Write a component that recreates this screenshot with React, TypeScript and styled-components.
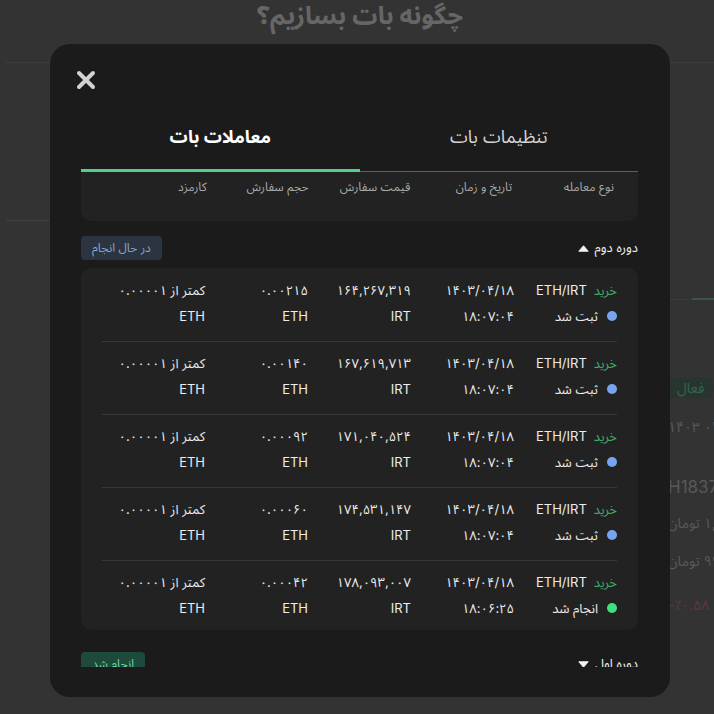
import { useLayoutEffect, useRef } from 'react'
import styled, { createGlobalStyle } from 'styled-components'

type Trade = {
  date: string
  time: string
  price: string
  volume: string
  status: 'pending' | 'done'
}

const trades: Trade[] = [
  { date: '۱۴۰۳/۰۴/۱۸', time: '۱۸:۰۷:۰۴', price: '۱۶۴,۲۶۷,۳۱۹', volume: '۰.۰۰۲۱۵', status: 'pending' },
  { date: '۱۴۰۳/۰۴/۱۸', time: '۱۸:۰۷:۰۴', price: '۱۶۷,۶۱۹,۷۱۳', volume: '۰.۰۰۱۴۰', status: 'pending' },
  { date: '۱۴۰۳/۰۴/۱۸', time: '۱۸:۰۷:۰۴', price: '۱۷۱,۰۴۰,۵۲۴', volume: '۰.۰۰۰۹۲', status: 'pending' },
  { date: '۱۴۰۳/۰۴/۱۸', time: '۱۸:۰۷:۰۴', price: '۱۷۴,۵۳۱,۱۴۷', volume: '۰.۰۰۰۶۰', status: 'pending' },
  { date: '۱۴۰۳/۰۴/۱۸', time: '۱۸:۰۶:۲۵', price: '۱۷۸,۰۹۳,۰۰۷', volume: '۰.۰۰۰۴۲', status: 'done' },
]

const firstRound: Trade[] = [
  { date: '۱۴۰۳/۰۴/۱۷', time: '۱۲:۱۰:۴۱', price: '۱۶۱,۰۲۳,۸۸۰', volume: '۰.۰۰۳۱۰', status: 'done' },
  { date: '۱۴۰۳/۰۴/۱۷', time: '۱۲:۰۹:۱۳', price: '۱۵۸,۷۴۲,۱۰۵', volume: '۰.۰۰۲۰۴', status: 'done' },
]

const headers = ['نوع معامله', 'تاریخ و زمان', 'قیمت سفارش', 'حجم سفارش', 'کارمزد']

export default function App() {
  const scrollRef = useRef<HTMLDivElement>(null)

  // the list is shown scrolled a little, header card tucked under the tabs
  useLayoutEffect(() => {
    if (scrollRef.current) scrollRef.current.scrollTop = 18
  }, [])

  return (
    <>
      <GlobalStyle />
      <Page>
        <PageHeader>
          <PageTitle>چگونه بات بسازیم؟</PageTitle>
        </PageHeader>
        <PageBody>
          <LeftPanel />
          <BotCard>
            <BotTabs>
              <BotTab $active />
              <BotTab />
            </BotTabs>
            <BotRow $top={78}>
              <span>وضعیت</span>
              <ActiveBadge>فعال</ActiveBadge>
            </BotRow>
            <BotRow $top={19}>
              <span>زمان</span>
              <span>۰۴:۵۱ ۱۴۰۳</span>
            </BotRow>
            <BotRow $top={39} $big>
              <span>شناسه</span>
              <span>H18373</span>
            </BotRow>
            <BotRow $top={15}>
              <span>سرمایه اولیه</span>
              <span>۱,۰۰۰ تومان</span>
            </BotRow>
            <BotRow $top={18}>
              <span>موجودی</span>
              <span>۹۹۴ تومان</span>
            </BotRow>
            <BotRow $top={24} $red>
              <span>سود</span>
              <span>٪۰.۵۸-</span>
            </BotRow>
          </BotCard>
        </PageBody>
      </Page>

      <Overlay>
        <Modal>
          <CloseButton aria-label="بستن">
            <svg width="20" height="20" viewBox="0 0 20 20">
              <path d="M3 3 L17 17 M17 3 L3 17" stroke="#d2d2d2" strokeWidth="4" strokeLinecap="round" />
            </svg>
          </CloseButton>

          <Tabs>
            <Tab>تنظیمات بات</Tab>
            <Tab $active>معاملات بات</Tab>
          </Tabs>

          <Scroll ref={scrollRef}>
            <HeaderCard>
              {headers.map((h) => (
                <HeaderCell key={h}>{h}</HeaderCell>
              ))}
            </HeaderCard>

            <SectionHead $top={15}>
              <SectionTitle>
                دوره دوم
                <svg width="11" height="7" viewBox="0 0 11 7">
                  <path d="M5.5 0.8 L10.2 6.2 L0.8 6.2 Z" fill="#f2f2f2" stroke="#f2f2f2" strokeLinejoin="round" />
                </svg>
              </SectionTitle>
              <Badge $tone="blue">در حال انجام</Badge>
            </SectionHead>
            <TradesCard>
              {trades.map((t, i) => (
                <TradeRow key={i} trade={t} />
              ))}
            </TradesCard>

            <SectionHead $top={22}>
              <SectionTitle>
                دوره اول
                <svg width="11" height="7" viewBox="0 0 11 7">
                  <path d="M0.8 0.8 L10.2 0.8 L5.5 6.2 Z" fill="#f2f2f2" stroke="#f2f2f2" strokeLinejoin="round" />
                </svg>
              </SectionTitle>
              <Badge $tone="green">انجام شد</Badge>
            </SectionHead>
            <TradesCard>
              {firstRound.map((t, i) => (
                <TradeRow key={i} trade={t} />
              ))}
            </TradesCard>
          </Scroll>
        </Modal>
      </Overlay>
    </>
  )
}

function TradeRow({ trade }: { trade: Trade }) {
  const done = trade.status === 'done'
  return (
    <Row>
      <Cell>
        <Line>
          <Buy>خرید</Buy>
          <span>ETH/IRT</span>
        </Line>
        <Line>
          <Dot $color={done ? '#3ee07f' : '#78a4ef'} />
          <span>{done ? 'انجام شد' : 'ثبت شد'}</span>
        </Line>
      </Cell>
      <Cell>
        <span>{trade.date}</span>
        <span>{trade.time}</span>
      </Cell>
      <Cell>
        <span>{trade.price}</span>
        <span>IRT</span>
      </Cell>
      <Cell>
        <span>{trade.volume}</span>
        <span>ETH</span>
      </Cell>
      <Cell>
        <span>کمتر از ۰.۰۰۰۰۱</span>
        <span>ETH</span>
      </Cell>
    </Row>
  )
}

const GlobalStyle = createGlobalStyle`
  html, body {
    margin: 0;
    padding: 0;
    height: 100%;
    overflow: hidden;
    background: #666;
  }
  body {
    font-family: "Inter", "Noto Sans Arabic", "DejaVu Sans", sans-serif;
  }
  * {
    box-sizing: border-box;
  }
`

/* page behind the dialog */

const Page = styled.div`
  height: 714px;
  padding-left: 6px;
  background: #666;
  overflow: hidden;
  direction: rtl;
`

const PageHeader = styled.header`
  height: 63px;
  border-bottom: 1px solid #7c7c7c;
  display: flex;
  justify-content: center;
`

const PageTitle = styled.h1`
  margin: 0;
  font-size: 25px;
  line-height: 30px;
  font-weight: 700;
  color: #cdcdcd;
`

const PageBody = styled.div`
  direction: ltr;
  display: grid;
  grid-template-columns: 654px 360px;
`

const LeftPanel = styled.div`
  margin-top: 157px;
  height: 400px;
  border-top: 1px solid #808080;
`

const BotCard = styled.div`
  direction: rtl;
  margin-top: 201px;
  padding: 0 0 0 8px;
  color: #b0b0b0;
  font-size: 14px;
`

const BotTabs = styled.div`
  display: flex;
  height: 36px;
`

const BotTab = styled.div<{ $active?: boolean }>`
  flex: ${(p) => (p.$active ? 1 : '0 0 24px')};
  border-bottom: ${(p) => (p.$active ? '2px solid #74aa92' : '1px solid #7a7a7a')};
`

const BotRow = styled.div<{ $top: number; $big?: boolean; $red?: boolean }>`
  margin-top: ${(p) => p.$top}px;
  height: ${(p) => (p.$big ? '22px' : '20px')};
  display: flex;
  justify-content: space-between;
  align-items: center;
  font-size: ${(p) => (p.$big ? '17px' : '14px')};
  line-height: 20px;
  color: ${(p) => (p.$red ? '#cc6c6c' : '#b0b0b0')};
  white-space: nowrap;
`

const ActiveBadge = styled.span`
  padding: 0 9px;
  line-height: 20px;
  border-radius: 4px;
  background: #4f6a5d;
  color: #6cc69b;
`

/* dialog */

const Overlay = styled.div`
  position: fixed;
  inset: 0;
  background: rgba(0, 0, 0, 0.5);
  display: flex;
  justify-content: center;
  align-items: flex-start;
  padding: 44px 0 0 6px;
`

const Modal = styled.div`
  width: 620px;
  height: 653px;
  background: #1b1b1b;
  border-radius: 20px;
  padding: 26px 32px 30px 31px;
  display: flex;
  flex-direction: column;
  direction: rtl;
`

const CloseButton = styled.button`
  align-self: flex-end;
  width: 20px;
  height: 20px;
  padding: 0;
  margin-left: -5px;
  border: none;
  background: none;
  cursor: pointer;
  display: flex;
`

const Tabs = styled.div`
  margin-top: 34px;
  display: grid;
  grid-template-columns: 1fr 1fr;
  align-items: end;
`

const Tab = styled.div<{ $active?: boolean }>`
  text-align: center;
  font-size: 18px;
  line-height: 26px;
  font-weight: ${(p) => (p.$active ? 700 : 400)};
  color: ${(p) => (p.$active ? '#ffffff' : '#d4d4d4')};
  padding-bottom: ${(p) => (p.$active ? '19px' : '21px')};
  border-bottom: ${(p) => (p.$active ? '3px solid #52cf8a' : '1px solid #5e5e5e')};
`

const Scroll = styled.div`
  flex: 1;
  min-height: 0;
  overflow-y: auto;
  scrollbar-width: none;

  &::-webkit-scrollbar {
    display: none;
  }
`

const HeaderCard = styled.div`
  display: grid;
  grid-template-columns: repeat(5, 1fr);
  padding: 24px 24px 25px;
  border-radius: 10px;
  background: #222222;
`

const HeaderCell = styled.div`
  font-size: 12px;
  line-height: 18px;
  color: #a9a9a9;
`

const SectionHead = styled.div<{ $top: number }>`
  margin-top: ${(p) => p.$top}px;
  height: 24px;
  display: flex;
  justify-content: space-between;
  align-items: center;
`

const SectionTitle = styled.div`
  display: flex;
  align-items: center;
  gap: 6px;
  font-size: 13px;
  color: #f0f0f0;
`

const Badge = styled.span<{ $tone: 'blue' | 'green' }>`
  height: 24px;
  padding: 0 11px;
  display: flex;
  align-items: center;
  border-radius: 4px;
  font-size: 12px;
  background: ${(p) => (p.$tone === 'blue' ? '#2b3441' : '#1d4a3a')};
  color: ${(p) => (p.$tone === 'blue' ? '#8fa6c8' : '#6fd3a2')};
`

const TradesCard = styled.div`
  margin-top: 8px;
  padding: 1px 21px 0;
  border-radius: 10px;
  background: #222222;
`

const Row = styled.div`
  display: grid;
  grid-template-columns: repeat(5, 1fr);
  padding: 10px 0 14px;
  border-bottom: 1px solid #383838;

  &:last-child {
    border-bottom: none;
    padding-bottom: 11px;
  }
`

const Cell = styled.div`
  display: flex;
  flex-direction: column;
  align-items: flex-start;
  gap: 4px;
  font-size: 13px;
  line-height: 22px;
  color: #ededed;
  white-space: nowrap;
`

const Line = styled.div`
  display: flex;
  align-items: center;
  gap: 7px;
`

const Buy = styled.span`
  color: #3fae68;
`

const Dot = styled.span<{ $color: string }>`
  width: 10px;
  height: 10px;
  border-radius: 50%;
  background: ${(p) => p.$color};
  margin-left: 2px;
`
